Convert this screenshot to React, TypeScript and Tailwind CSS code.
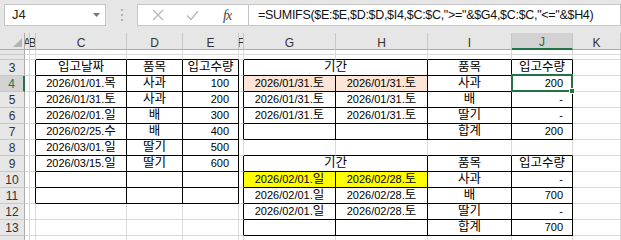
import React from "react";

type Cell = { t?: string; a?: "c" | "r"; fill?: string; span?: number };

const letters = ["", "A", "B", "C", "D", "E", "F", "G", "H", "I", "J", "K"];

// bordered ranges: [r1, r2, c1, c2]
const boxes = [
    [3, 11, 3, 5],
    [3, 7, 7, 10],
    [9, 13, 7, 10],
];

function inBox(r: number, c: number) {
    return boxes.some(([r1, r2, c1, c2]) => r >= r1 && r <= r2 && c >= c1 && c <= c2);
}

const peach = "bg-[#fce4d6]";
const yellow = "bg-[#ffff00]";

const data: Record<number, Record<number, Cell>> = {
    3: { 3: { t: "입고날짜", a: "c" }, 4: { t: "품목", a: "c" }, 5: { t: "입고수량", a: "c" }, 7: { t: "기간", a: "c", span: 2 }, 9: { t: "품목", a: "c" }, 10: { t: "입고수량", a: "c" } },
    4: { 3: { t: "2026/01/01.목", a: "c" }, 4: { t: "사과", a: "c" }, 5: { t: "100", a: "r" }, 7: { t: "2026/01/31.토", a: "c", fill: peach }, 8: { t: "2026/01/31.토", a: "c", fill: peach }, 9: { t: "사과", a: "c" }, 10: { t: "200", a: "r" } },
    5: { 3: { t: "2026/01/31.토", a: "c" }, 4: { t: "사과", a: "c" }, 5: { t: "200", a: "r" }, 7: { t: "2026/01/31.토", a: "c" }, 8: { t: "2026/01/31.토", a: "c" }, 9: { t: "배", a: "c" }, 10: { t: "-", a: "r" } },
    6: { 3: { t: "2026/02/01.일", a: "c" }, 4: { t: "배", a: "c" }, 5: { t: "300", a: "r" }, 7: { t: "2026/01/31.토", a: "c" }, 8: { t: "2026/01/31.토", a: "c" }, 9: { t: "딸기", a: "c" }, 10: { t: "-", a: "r" } },
    7: { 3: { t: "2026/02/25.수", a: "c" }, 4: { t: "배", a: "c" }, 5: { t: "400", a: "r" }, 9: { t: "합계", a: "c" }, 10: { t: "200", a: "r" } },
    8: { 3: { t: "2026/03/01.일", a: "c" }, 4: { t: "딸기", a: "c" }, 5: { t: "500", a: "r" } },
    9: { 3: { t: "2026/03/15.일", a: "c" }, 4: { t: "딸기", a: "c" }, 5: { t: "600", a: "r" }, 7: { t: "기간", a: "c", span: 2 }, 9: { t: "품목", a: "c" }, 10: { t: "입고수량", a: "c" } },
    10: { 7: { t: "2026/02/01.일", a: "c", fill: yellow }, 8: { t: "2026/02/28.토", a: "c", fill: yellow }, 9: { t: "사과", a: "c" }, 10: { t: "-", a: "r" } },
    11: { 7: { t: "2026/02/01.일", a: "c" }, 8: { t: "2026/02/28.토", a: "c" }, 9: { t: "배", a: "c" }, 10: { t: "700", a: "r" } },
    12: { 7: { t: "2026/02/01.일", a: "c" }, 8: { t: "2026/02/28.토", a: "c" }, 9: { t: "딸기", a: "c" }, 10: { t: "-", a: "r" } },
    13: { 9: { t: "합계", a: "c" }, 10: { t: "700", a: "r" } },
};

// hangul runs a bit bigger than digits, like gulim
function Txt({ s }: { s: string }) {
    const parts = s.split(/([가-힣]+)/);
    return (
        <>
            {parts.map((p, i) =>
                i % 2 === 1 ? (
                    <span key={i} className="text-[12.5px]">{p}</span>
                ) : (
                    <span key={i}>{p}</span>
                )
            )}
        </>
    );
}

function FormulaBar() {
    return (
        <div className="h-[33px] bg-[#e6e6e6] flex items-start pt-[4px] pl-[4px] font-['Liberation_Sans',sans-serif]">
            <div className="w-[102px] h-[22px] bg-white border border-[#c6c6c6] flex items-center justify-between pl-[7px] pr-[5px] text-[13px] text-[#222]">
                <span>J4</span>
                <svg width="7" height="4" viewBox="0 0 7 4"><path d="M0 0h7L3.5 4z" fill="#777" /></svg>
            </div>
            <div className="w-[31px] h-[22px] flex flex-col items-center justify-center gap-[3px]">
                <span className="w-[2px] h-[2px] bg-[#b0b0b0]" />
                <span className="w-[2px] h-[2px] bg-[#b0b0b0]" />
                <span className="w-[2px] h-[2px] bg-[#b0b0b0]" />
            </div>
            <div className="w-[112px] h-[22px] bg-white border border-[#c6c6c6] flex items-center">
                <svg className="ml-[14px]" width="12" height="12" viewBox="0 0 12 12"><path d="M1 1l10 10M11 1L1 11" stroke="#b8b8b8" strokeWidth="1.3" /></svg>
                <svg className="ml-[22px]" width="13" height="11" viewBox="0 0 13 11"><path d="M1 5.5l4 4L12 1" stroke="#b8b8b8" strokeWidth="1.4" fill="none" /></svg>
                <span className="ml-[24px] text-[14px] italic text-[#444] font-['Liberation_Serif',serif] tracking-[-1px]">fx</span>
            </div>
            <div className="flex-1 h-[22px] bg-white border border-[#c6c6c6] border-l-0 flex items-center pl-[9px] text-[12.5px] tracking-[-0.3px] text-[#111] whitespace-nowrap overflow-hidden">
                =SUMIFS($E:$E,$D:$D,$I4,$C:$C,"&gt;="&amp;$G4,$C:$C,"&lt;="&amp;$H4)
            </div>
        </div>
    );
}

export default function App() {
    const cells: React.ReactNode[] = [];

    // column header row
    for (let c = 0; c < 12; c++) {
        if (c === 0) {
            cells.push(
                <div key="h0" className="bg-[#e6e6e6] border-r border-b border-r-[#ababab] border-b-[#ababab] flex items-end justify-end p-[2px]">
                    <svg width="9" height="9" viewBox="0 0 9 9"><path d="M9 0v9H0z" fill="#b4b4b4" /></svg>
                </div>
            );
        } else if (c === 10) {
            cells.push(
                <div key={"h" + c} className="bg-[#d2d2d2] border-r border-r-[#c8c8c8] border-b-2 border-b-[#217346] flex items-center justify-center pt-[3px] text-[12px] text-[#217346]">
                    {letters[c]}
                </div>
            );
        } else {
            cells.push(
                <div key={"h" + c} className="bg-[#e6e6e6] border-r border-b border-r-[#c8c8c8] border-b-[#ababab] flex items-center justify-center pt-[3px] text-[12px] text-[#333] overflow-hidden">
                    {letters[c]}
                </div>
            );
        }
    }

    for (let r = 1; r <= 14; r++) {
        const row = data[r] || {};
        // row header
        if (r === 4) {
            cells.push(
                <div key={"r" + r} className="bg-[#d2d2d2] border-r-2 border-r-[#217346] border-b border-b-[#c8c8c8] flex items-center justify-center text-[12px] text-[#217346]">
                    {r}
                </div>
            );
        } else {
            cells.push(
                <div key={"r" + r} className="bg-[#e6e6e6] border-r border-b border-r-[#ababab] border-b-[#c8c8c8] flex items-center justify-center text-[12px] text-[#333] overflow-hidden">
                    {r > 2 && r < 14 ? r : ""}
                </div>
            );
        }

        for (let c = 1; c <= 11; c++) {
            const cell = row[c] || {};
            const span = cell.span || 1;
            const rc = c + span - 1;
            const rightBlack = inBox(r, rc) || inBox(r, rc + 1);
            const bottomBlack = inBox(r, c) || inBox(r + 1, c);
            const align = cell.a === "r" ? "justify-end pr-[9px]" : "justify-center";
            const sel = r === 4 && c === 10;
            cells.push(
                <div
                    key={r + "-" + c}
                    className={
                        "relative flex items-center whitespace-nowrap text-[11px] text-black border-r border-b " +
                        (rightBlack ? "border-r-black " : "border-r-[#d9d9d9] ") +
                        (bottomBlack ? "border-b-black " : "border-b-[#d9d9d9] ") +
                        (span === 2 ? "col-span-2 " : "") +
                        (cell.fill || "bg-white") + " " + align
                    }
                >
                    {cell.t && <Txt s={cell.t} />}
                    {sel && (
                        <div className="absolute left-[-1px] top-[-2px] right-[-1px] bottom-[-1px] border-2 border-[#217346] z-10">
                            <div className="absolute right-[-4px] bottom-[-4px] w-[6px] h-[6px] bg-[#217346] border border-white" />
                        </div>
                    )}
                </div>
            );
            if (span === 2) c++;
        }
    }

    return (
        <div className="w-[621px] h-[240px] overflow-hidden bg-white font-['Liberation_Sans','Noto_Sans_CJK_KR',sans-serif]">
            <FormulaBar />
            <div className="grid grid-cols-[25px_5px_6px_91px_56px_56px_5px_92px_92px_84px_61px_1fr] grid-rows-[17px_5px_5px_repeat(12,16px)] font-['Liberation_Sans','Noto_Sans_CJK_KR',sans-serif]">
                {cells}
            </div>
        </div>
    );
}
